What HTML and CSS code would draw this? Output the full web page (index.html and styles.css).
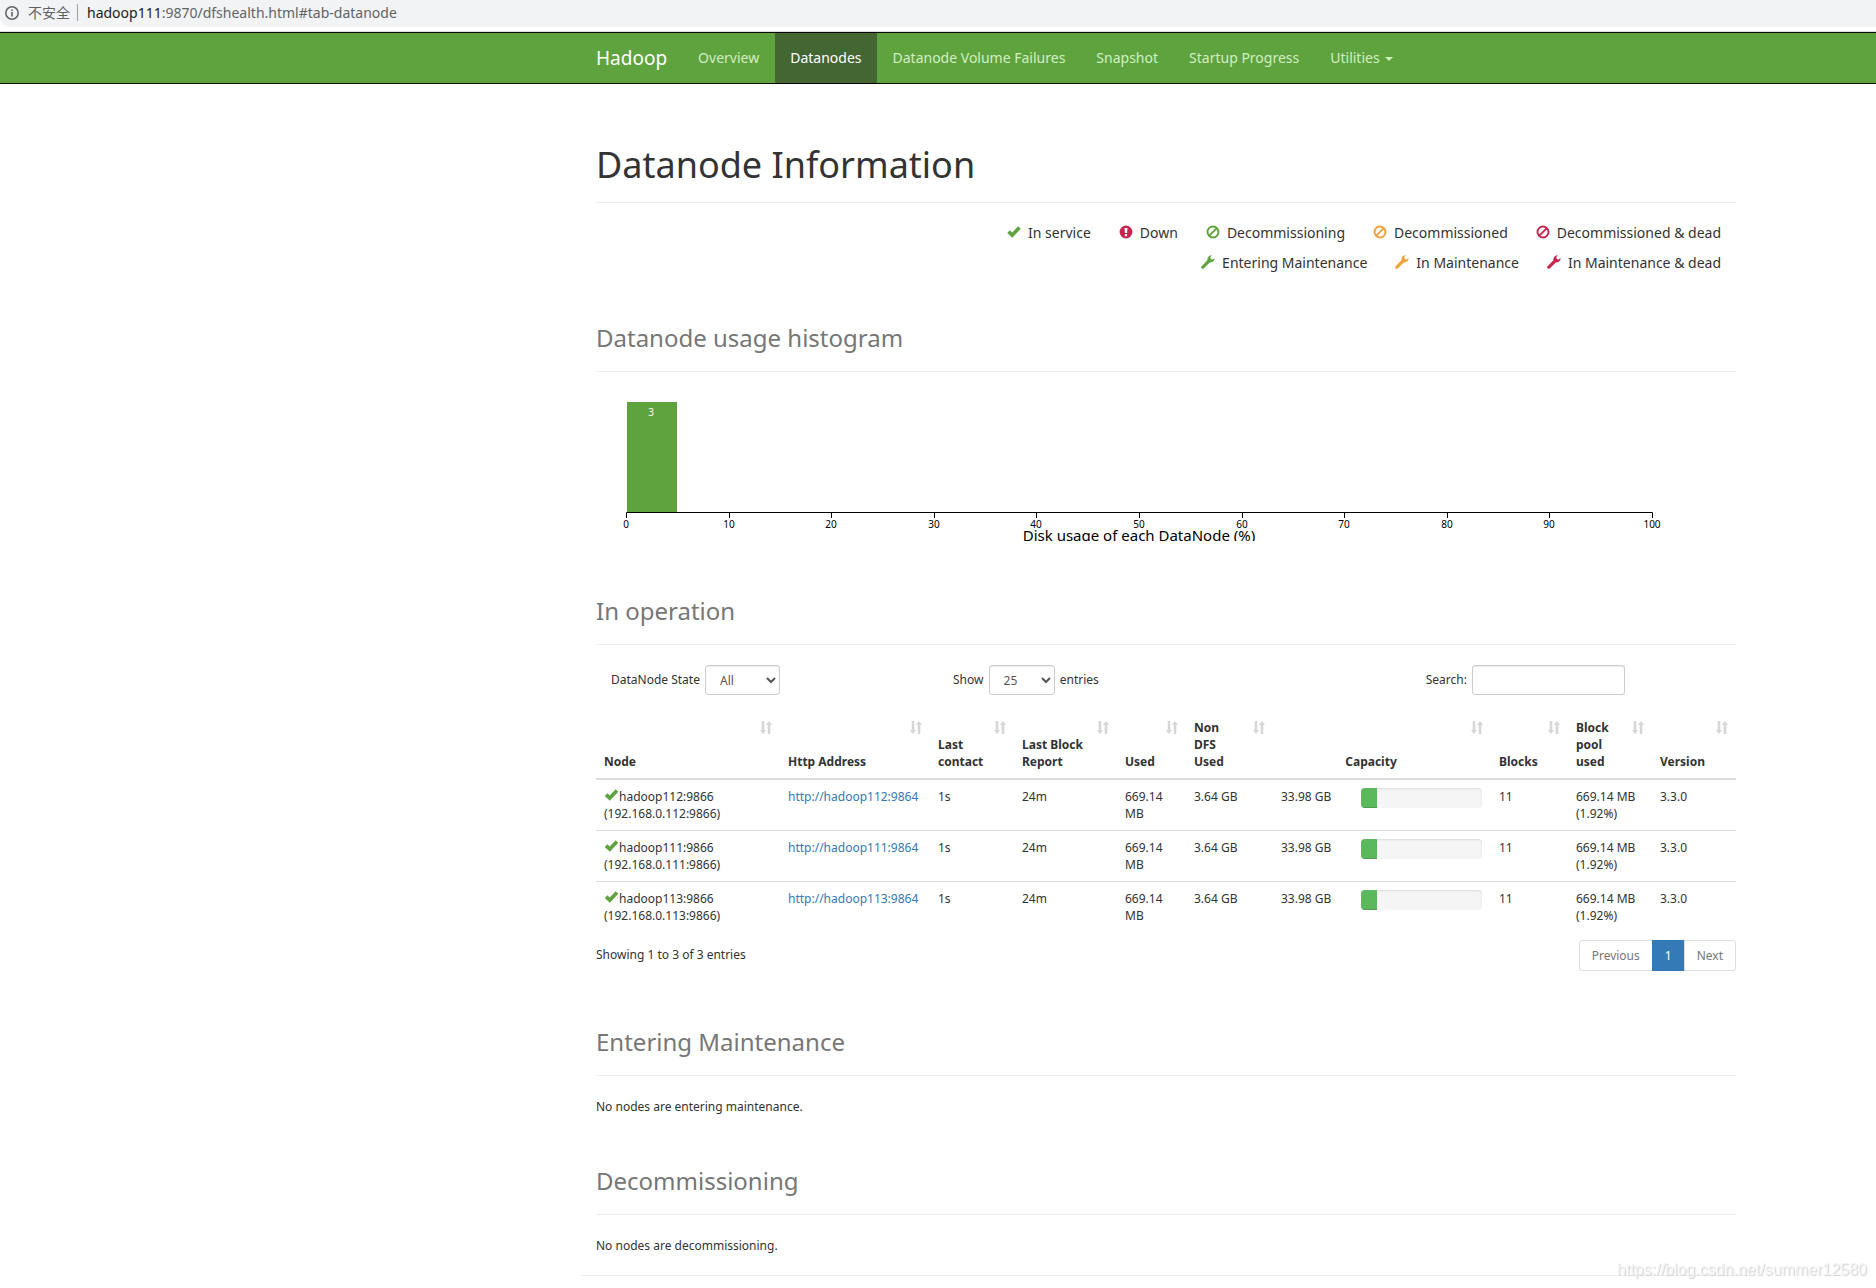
FILE: index.html
```
<!DOCTYPE html>
<html lang="en">
<head>
<meta charset="utf-8">
<title>Datanode Information</title>
<link rel="stylesheet" href="styles.css">
</head>
<body>
<svg class="sprite" width="0" height="0" aria-hidden="true">
  <symbol id="ok" viewBox="0 0 14 12"><path d="M0.3 7 2.900 4.300 5.200 6.500 11.200 0.300 13.800 2.700 5.300 11.800Z"/></symbol>
  <symbol id="down" viewBox="0 0 14 14"><path fill-rule="evenodd" d="M7 .6a6.4 6.4 0 1 0 0 12.8A6.4 6.4 0 0 0 7 .6ZM5.5 3h3L8.100 8H5.900ZM5.900 9h2.200v2.200H5.900Z"/></symbol>
  <symbol id="ban" viewBox="0 0 14 14"><path fill="none" stroke="currentColor" stroke-width="1.900" d="M7 1.500a5.500 5.500 0 1 0 0 11A5.500 5.500 0 0 0 7 1.500ZM3.400 10.600 10.600 3.400"/></symbol>
  <symbol id="wrench" viewBox="0 0 14 14"><path d="M.4 11.500 6.400 5.300C6 2.700 7.800.3 10.900.3L9.300 2.100l.5 1.800 2 .5L13.600 3c.2 3-2.300 4.900-4.900 4.400L2.700 13.500Q1.500 14.200.6 13.300T.4 11.500Z"/></symbol>
  <symbol id="sort" viewBox="0 0 12 13"><path d="M1.700 0h2.600v9h1.900L3 13 0 9h1.700ZM7.700 13h2.600V4H12L9 0 5.800 4h1.900Z"/></symbol>
</svg>

<div class="address">
  <svg class="info" viewBox="0 0 14 14"><circle cx="7" cy="7" r="6.200" fill="none" stroke="currentColor" stroke-width="1.500"/><path d="M6.200 6h1.600v4.500H6.200ZM6.200 3.400h1.600v1.600H6.200Z"/></svg>
  <span class="insecure">不安全</span>
  <span class="url"><b>hadoop111</b>:9870/dfshealth.html#tab-datanode</span>
</div>

<header class="navbar">
  <nav class="container">
    <a class="brand" href="#">Hadoop</a>
    <a href="#">Overview</a>
    <a class="active" href="#">Datanodes</a>
    <a href="#">Datanode Volume Failures</a>
    <a href="#">Snapshot</a>
    <a href="#">Startup Progress</a>
    <a href="#">Utilities <i class="caret"></i></a>
  </nav>
</header>

<main class="page">
<div class="container">
  <h1 class="heading">Datanode Information</h1>

  <div class="legend">
    <ul>
      <li><svg class="icon ok green"><use href="#ok"/></svg>In service</li>
      <li><svg class="icon red"><use href="#down"/></svg>Down</li>
      <li><svg class="icon green"><use href="#ban"/></svg>Decommissioning</li>
      <li><svg class="icon orange"><use href="#ban"/></svg>Decommissioned</li>
      <li><svg class="icon red"><use href="#ban"/></svg>Decommissioned &amp; dead</li>
    </ul>
    <ul>
      <li><svg class="icon green"><use href="#wrench"/></svg>Entering Maintenance</li>
      <li><svg class="icon orange"><use href="#wrench"/></svg>In Maintenance</li>
      <li><svg class="icon red"><use href="#wrench"/></svg>In Maintenance &amp; dead</li>
    </ul>
  </div>

  <h2 class="heading"><small>Datanode usage histogram</small></h2>
  <svg class="histogram" viewBox="0 0 1140 149">
    <rect x="31" y="10" width="50" height="110" fill="#5fa33e"/>
    <text class="count" x="55" y="24">3</text>
    <path class="axis" d="M30.500 126V120.500H1056.500V126M133.500 120V126M235.500 120V126M338.500 120V126M440.500 120V126M543.500 120V126M646.500 120V126M748.500 120V126M851.500 120V126M953.500 120V126"/>
    <g class="ticks">
      <text x="30" y="136">0</text><text x="133" y="136">10</text><text x="235" y="136">20</text><text x="338" y="136">30</text><text x="440" y="136">40</text><text x="543" y="136">50</text><text x="646" y="136">60</text><text x="748" y="136">70</text><text x="851" y="136">80</text><text x="953" y="136">90</text><text x="1056" y="136">100</text>
    </g>
    <text class="title" x="543" y="149">Disk usage of each DataNode (%)</text>
  </svg>

  <h2 class="heading operation"><small>In operation</small></h2>
  <form class="filters">
    <label>DataNode State <select class="state"><option>All</option></select></label>
    <label>Show <select class="length"><option>25</option></select> entries</label>
    <label class="search">Search: <input type="search"></label>
  </form>

  <table class="nodes">
    <colgroup><col class="c-node"><col class="c-http"><col class="c-contact"><col class="c-report"><col class="c-used"><col class="c-non"><col class="c-capacity"><col class="c-blocks"><col class="c-pool"><col></colgroup>
    <thead>
      <tr>
        <th>Node<svg><use href="#sort"/></svg></th>
        <th>Http Address<svg><use href="#sort"/></svg></th>
        <th>Last contact<svg><use href="#sort"/></svg></th>
        <th>Last Block Report<svg><use href="#sort"/></svg></th>
        <th>Used<svg><use href="#sort"/></svg></th>
        <th>Non DFS Used<svg><use href="#sort"/></svg></th>
        <th class="center">Capacity<svg><use href="#sort"/></svg></th>
        <th>Blocks<svg><use href="#sort"/></svg></th>
        <th>Block pool used<svg><use href="#sort"/></svg></th>
        <th>Version<svg><use href="#sort"/></svg></th>
      </tr>
    </thead>
    <tbody>
      <tr>
        <td><svg class="mark"><use href="#ok"/></svg>hadoop112:9866 (192.168.0.112:9866)</td>
        <td><a href="#">http://hadoop112:9864</a></td>
        <td>1s</td><td>24m</td><td>669.14 MB</td><td>3.64 GB</td>
        <td><div class="capacity">33.98 GB<div class="progress"><div class="bar" style="width:13%"></div></div></div></td>
        <td>11</td><td>669.14 MB (1.92%)</td><td>3.3.0</td>
      </tr>
      <tr>
        <td><svg class="mark"><use href="#ok"/></svg>hadoop111:9866 (192.168.0.111:9866)</td>
        <td><a href="#">http://hadoop111:9864</a></td>
        <td>1s</td><td>24m</td><td>669.14 MB</td><td>3.64 GB</td>
        <td><div class="capacity">33.98 GB<div class="progress"><div class="bar" style="width:13%"></div></div></div></td>
        <td>11</td><td>669.14 MB (1.92%)</td><td>3.3.0</td>
      </tr>
      <tr>
        <td><svg class="mark"><use href="#ok"/></svg>hadoop113:9866 (192.168.0.113:9866)</td>
        <td><a href="#">http://hadoop113:9864</a></td>
        <td>1s</td><td>24m</td><td>669.14 MB</td><td>3.64 GB</td>
        <td><div class="capacity">33.98 GB<div class="progress"><div class="bar" style="width:13%"></div></div></div></td>
        <td>11</td><td>669.14 MB (1.92%)</td><td>3.3.0</td>
      </tr>
    </tbody>
  </table>

  <div class="table-footer">
    <span>Showing 1 to 3 of 3 entries</span>
    <div class="pagination"><button type="button">Previous</button><button type="button" class="current">1</button><button type="button">Next</button></div>
  </div>

  <h2 class="heading maintenance"><small>Entering Maintenance</small></h2>
  <p class="note">No nodes are entering maintenance.</p>
  <h2 class="heading decommissioning"><small>Decommissioning</small></h2>
  <p class="note">No nodes are decommissioning.</p>
</div>
<hr class="rule">
</main>
<div class="watermark">https://blog.csdn.net/summer12580</div>
</body>
</html>
```
FILE: styles.css
```
* { box-sizing: border-box; }
body { margin: 0; background: #fff; color: #333; font: 12px/17px "Noto Sans", "Noto Sans CJK SC", sans-serif; }
a { color: #337ab7; text-decoration: none; }
.sprite { position: absolute; }

.address { display: flex; align-items: center; height: 27px; padding: 0 5px 2px; background: #f1f3f4; border-bottom-left-radius: 10px; color: #5f6368; font-size: 14px; }
.info { width: 14px; height: 14px; margin-right: 9px; fill: currentColor; }
.insecure { padding-right: 7px; border-right: 1px solid #9aa0a6; margin-right: 9px; }
.url b { color: #202124; font-weight: 400; }

.navbar, .page { padding-left: 456px; }
.container { max-width: 1170px; margin: 0 auto; padding: 0 15px; }
.navbar { margin-top: 5px; background: #5fa33e; border-top: 1px solid #080808; border-bottom: 1px solid #080808; box-shadow: 0 -1px #ddd; }
.navbar .container { display: flex; gap: 1px; }
.navbar a { padding: 15px; color: #d2efc3; font-size: 14px; line-height: 20px; white-space: nowrap; }
.navbar .brand { padding-left: 0; color: #fff; font-size: 19px; }
.navbar .active { background: #446633; color: #fff; }
.caret { display: inline-block; margin-left: 2px; vertical-align: middle; border-top: 4px solid; border-left: 4px solid transparent; border-right: 4px solid transparent; }

.heading { margin: 0 0 20px; padding-bottom: 17px; border-bottom: 1px solid #eee; font-size: 36px; line-height: 41px; font-weight: 400; }
.heading small { color: #777; font-size: 24px; line-height: 24px; }
h1.heading { margin: 60px 0 15px; }

.legend { margin-bottom: 35px; padding-right: 15px; font-size: 14px; line-height: 30px; }
.legend ul { display: flex; justify-content: flex-end; gap: 28px; margin: 0; padding: 0; list-style: none; }
.legend li { display: flex; align-items: center; gap: 7px; white-space: nowrap; }
.icon { width: 14px; height: 14px; margin-bottom: 2px; fill: currentColor; }
.icon.ok { height: 12px; }
.green { color: #5fa33e; }
.orange { color: #f1a13b; }
.red { color: #c7254e; }

.histogram { display: block; width: 100%; overflow: hidden; }
.histogram text { text-anchor: middle; }
.histogram .count { fill: #fff; font-size: 10px; }
.histogram .ticks { fill: #000; font-size: 10px; }
.histogram .title { fill: #000; font-size: 15px; }
.axis { fill: none; stroke: #000; }

.operation { margin-top: 45px; }
.filters { display: flex; height: 30px; margin-bottom: 16px; }
.filters label { width: 30%; padding-left: 15px; line-height: 30px; white-space: nowrap; }
.filters .search { width: auto; margin-left: auto; margin-right: 111px; }
.filters select, .filters input { height: 30px; padding: 5px 10px; background: #fff; border: 1px solid #ccc; border-radius: 3px; color: #555; font: inherit; line-height: 18px; vertical-align: top; box-shadow: inset 0 1px 1px rgba(0, 0, 0, .075); }
.filters select { margin: 0 2px; }
.state { width: 75px; }
.length { width: 66px; }
.filters input { width: 153px; margin-left: 2px; }

.nodes { width: 100%; table-layout: fixed; border-collapse: separate; border-spacing: 0; }
.c-node { width: 184px; }
.c-http { width: 150px; }
.c-contact { width: 84px; }
.c-report { width: 103px; }
.c-used { width: 69px; }
.c-non { width: 87px; }
.c-capacity { width: 218px; }
.c-blocks { width: 77px; }
.c-pool { width: 84px; }
.nodes th { position: relative; padding: 8px 30px 8px 8px; border-bottom: 2px solid #ddd; text-align: left; vertical-align: bottom; }
.nodes th.center { text-align: center; }
.nodes th svg { position: absolute; top: 10px; right: 8px; width: 12px; height: 13px; fill: #d6d6d6; }
.nodes td { padding: 8px; vertical-align: top; }
.nodes tr + tr td { border-top: 1px solid #ddd; }
.nodes td:first-child { padding-right: 50px; }
.mark { width: 15px; height: 12px; fill: #5fa33e; }
.capacity { display: flex; justify-content: space-between; padding-right: 1px; }
.progress { width: 121px; height: 20px; overflow: hidden; background: #f5f5f5; border-radius: 4px; box-shadow: inset 0 1px 2px rgba(0, 0, 0, .1); }
.bar { height: 100%; background: #5cb85c; box-shadow: inset 0 -1px rgba(0, 0, 0, .15); }

.table-footer { display: flex; justify-content: space-between; padding-top: 8px; }
.table-footer span { padding-top: 6px; }
.pagination { display: flex; }
.pagination button { height: 31px; padding: 0 12px; margin-left: -1px; background: #fff; border: 1px solid #ddd; color: #777; font: inherit; }
.pagination button:first-child { border-radius: 3px 0 0 3px; }
.pagination button:last-child { border-radius: 0 3px 3px 0; }
.pagination .current { background: #337ab7; border-color: #337ab7; color: #fff; }

.maintenance { margin-top: 46px; }
.note { margin: 0; line-height: 22px; }
.decommissioning { margin-top: 38px; }
.rule { max-width: 1170px; margin: 18px auto 0; border: 0; border-top: 1px solid #eee; }
.watermark { position: fixed; right: 9px; bottom: 8px; color: #f4f4f4; font: 16px/20px "Liberation Sans", sans-serif; text-shadow: 1px 1px 1px #d0d0d0; }
```
